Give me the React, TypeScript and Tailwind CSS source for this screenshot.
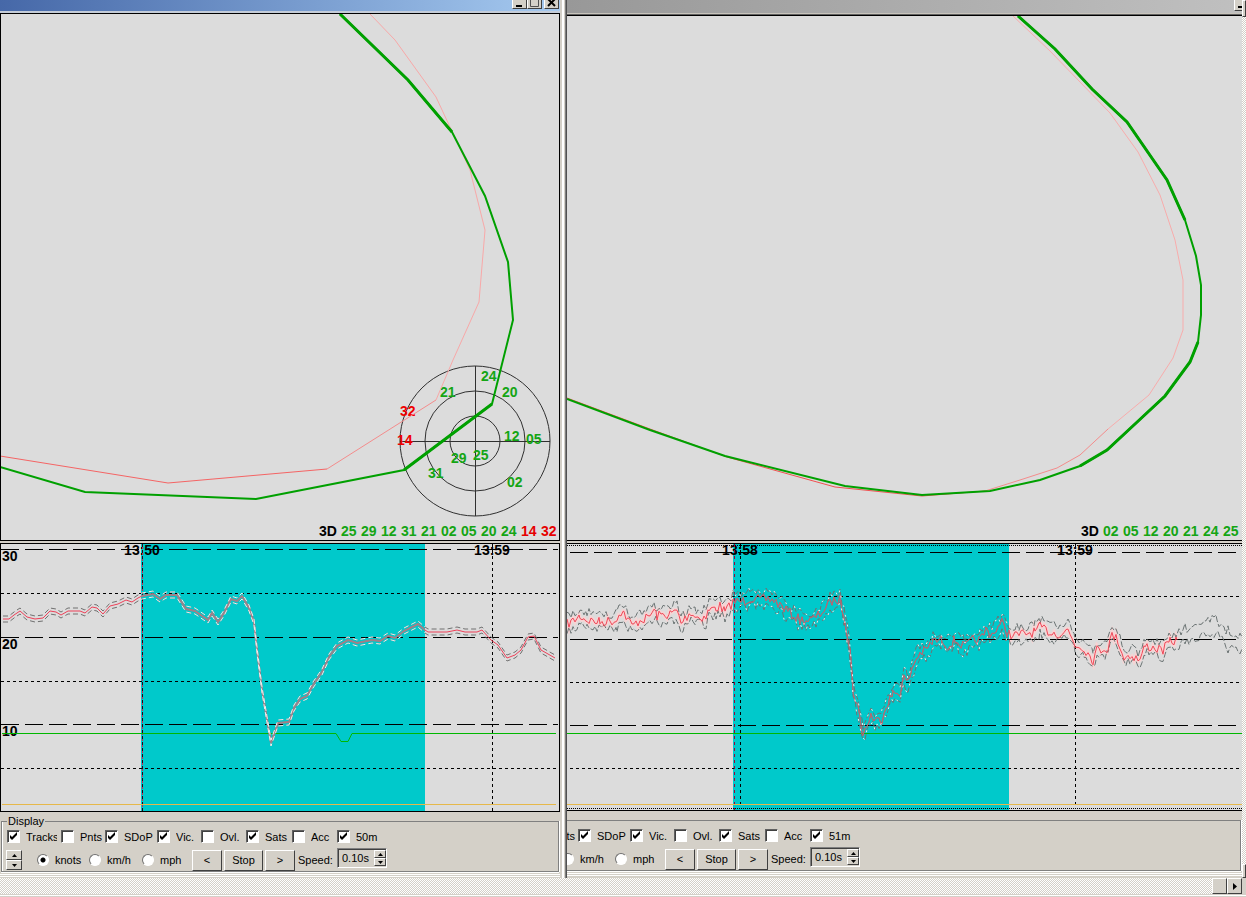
import { useState } from "react";

type Point = [number, number];

const toPoints = (points: Point[]) => points.map((p) => p.join(",")).join(" ");

const shift = (points: Point[], dy: number): Point[] =>
  points.map(([x, y]) => [x, y + dy]);

// fills in a sample every 2px with a bit of repeatable receiver noise
const addNoise = (points: Point[], amount: number, seed: number) => {
  const out: Point[] = [];
  let state = seed;
  for (let i = 0; i < points.length - 1; i++) {
    const [x1, y1] = points[i];
    const [x2, y2] = points[i + 1];
    for (let x = x1; x < x2; x += 2) {
      state = (state * 16807) % 2147483647;
      const noise = (state / 2147483647 - 0.5) * 2 * amount;
      const y = y1 + ((y2 - y1) * (x - x1)) / (x2 - x1) + noise;
      out.push([x, Math.round(y * 10) / 10]);
    }
  }
  out.push(points[points.length - 1]);
  return out;
};

const leftSpeed: Point[] = [
  [3, 619], [9, 619], [14, 615], [20, 611], [27, 617], [35, 619], [43, 618], [50, 611], [56, 612],
  [61, 615], [68, 611], [80, 611], [85, 613], [92, 607], [97, 608], [103, 614], [110, 606],
  [118, 604], [126, 600], [132, 602], [138, 598], [142, 596], [153, 594], [160, 599], [166, 595],
  [177, 595], [186, 609], [195, 611], [208, 620], [212, 613], [218, 622], [224, 613], [231, 599],
  [237, 601], [242, 596], [249, 608], [254, 622], [257, 650], [262, 690], [271, 743], [278, 723],
  [289, 722], [294, 708], [300, 699], [307, 696], [313, 685], [322, 672], [329, 657], [337, 646],
  [348, 640], [357, 643], [372, 640], [380, 641], [388, 636], [395, 638], [404, 631], [418, 624],
  [425, 630], [428, 632], [447, 632], [457, 630], [465, 632], [477, 632], [482, 630], [491, 640],
  [498, 645], [507, 658], [515, 655], [521, 650], [528, 637], [534, 636], [541, 650], [555, 658],
];

const rightSpeed: Point[] = [
  [567, 624], [573, 621], [580, 616], [587, 620], [600, 622], [610, 621], [617, 620], [619, 611],
  [624, 613], [632, 626], [640, 620], [648, 618], [654, 610], [657, 616], [670, 614], [677, 611],
  [681, 623], [691, 612], [696, 617], [706, 617], [709, 610], [716, 608], [720, 606], [725, 612],
  [733, 602], [745, 601], [750, 598], [760, 600], [772, 599], [780, 605], [790, 613], [800, 620],
  [812, 620], [820, 614], [832, 601], [840, 600], [845, 618], [850, 650], [853, 690], [858, 708],
  [863, 735], [867, 725], [871, 715], [875, 721], [882, 719], [886, 705], [893, 694], [900, 692],
  [904, 678], [908, 683], [912, 668], [918, 655], [926, 650], [933, 641], [942, 640], [948, 646],
  [955, 640], [965, 647], [973, 640], [980, 640], [986, 630], [992, 634], [1002, 623], [1007, 632],
  [1013, 636], [1022, 634], [1035, 632], [1040, 627], [1050, 632], [1060, 634], [1068, 630],
  [1075, 645], [1084, 648], [1093, 660], [1097, 650], [1108, 648], [1112, 635], [1118, 640],
  [1124, 658], [1130, 655], [1140, 660], [1145, 646], [1155, 648], [1163, 650], [1170, 642],
  [1177, 640],
];

const rightUpper: Point[] = [
  ...shift(rightSpeed, -7),
  [1185, 628], [1200, 625], [1208, 620], [1217, 619], [1224, 629], [1242, 637],
];
const rightLower: Point[] = [
  ...shift(rightSpeed, 7),
  [1185, 641], [1200, 638], [1212, 635], [1220, 637], [1226, 648], [1242, 649],
];

const leftTrack: Point[] = [
  [0, 467], [85, 492], [256, 499], [404, 470], [492, 404], [513, 320], [508, 262], [485, 196],
  [452, 132], [408, 80], [340, 14],
];
const rightTrack: Point[] = [
  [567, 399], [650, 430], [725, 456], [845, 486], [922, 495], [990, 491], [1040, 480], [1080, 466],
  [1107, 450], [1135, 424], [1165, 396], [1190, 362], [1198, 342], [1201, 315], [1201, 285],
  [1196, 256], [1185, 220], [1167, 180], [1127, 122], [1092, 89], [1055, 49], [1018, 16],
];

const satellites = [
  { id: "24", x: 481, y: 381 },
  { id: "20", x: 502, y: 397 },
  { id: "21", x: 440, y: 397 },
  { id: "32", x: 400, y: 416, lost: true },
  { id: "14", x: 397, y: 445, lost: true },
  { id: "12", x: 504, y: 441 },
  { id: "05", x: 526, y: 444 },
  { id: "29", x: 451, y: 463 },
  { id: "25", x: 473, y: 460 },
  { id: "31", x: 428, y: 478 },
  { id: "02", x: 507, y: 487 },
];

const raised =
  "bg-[#d4d0c8] border border-t-white border-l-white border-r-[#404040] border-b-[#404040]";
const sunken =
  "border border-t-[#808080] border-l-[#808080] border-r-white border-b-white";
const dither =
  "bg-[#ebe8e3] bg-[repeating-conic-gradient(#d4d0c8_0_25%,#ffffff_0_50%)] bg-[length:2px_2px]";

const SatList = ({ used, lost = [] }: { used: string[]; lost?: string[] }) => (
  <div className="absolute right-[3px] bottom-[2px] flex gap-1 text-[14px] leading-4 font-bold text-[#14a514]">
    <span className="w-[18px] text-black">3D</span>
    {used.map((id) => (
      <span key={id} className="w-4">
        {id}
      </span>
    ))}
    {lost.map((id) => (
      <span key={id} className="w-4 text-[#e60000]">
        {id}
      </span>
    ))}
  </div>
);

const SkyPlot = () => (
  <g>
    <g fill="none" stroke="#303030" strokeWidth="1">
      <circle cx="475" cy="441" r="25" />
      <circle cx="475" cy="441" r="50" />
      <circle cx="475" cy="441" r="75" />
      <path d="M400 441.5H550M475.5 366V516" />
    </g>
    {satellites.map((sat) => (
      <text
        key={sat.id}
        x={sat.x}
        y={sat.y}
        className="text-[14px] font-bold"
        fill={sat.lost ? "#f00000" : "#14a514"}
      >
        {sat.id}
      </text>
    ))}
  </g>
);

type GridProps = { x1: number; x2: number; major: number[]; minor: number[] };

const GridLines = ({ x1, x2, major, minor }: GridProps) => (
  <g stroke="#000" shapeRendering="crispEdges">
    {major.map((y) => (
      <line key={y} x1={x1} x2={x2} y1={y + 0.5} y2={y + 0.5} strokeDasharray="18 6" />
    ))}
    {minor.map((y) => (
      <line key={y} x1={x1} x2={x2} y1={y + 0.5} y2={y + 0.5} strokeDasharray="3 3" />
    ))}
  </g>
);

const LeftChart = () => (
  <svg viewBox="0 543 560 269" className="block h-auto w-full bg-[#dcdcdc]">
    <clipPath id="left-selection">
      <rect x="141" y="544" width="284" height="267" />
    </clipPath>
    <rect x="141" y="544" width="284" height="267" fill="#00c9cb" />
    <GridLines x1={1} x2={558} major={[549, 637, 724]} minor={[593, 681, 768]} />
    <g className="text-[14px] font-bold">
      <text x="2" y="561">30</text>
      <text x="2" y="649">20</text>
      <text x="2" y="736">10</text>
      <text x="142" y="555" textAnchor="middle">13:50</text>
      <text x="492" y="555" textAnchor="middle">13:59</text>
    </g>
    <g shapeRendering="crispEdges">
      <path d="M142.5 544V811" stroke="#300010" strokeDasharray="3 3" />
      <path d="M142.5 547V811" stroke="#d02050" strokeDasharray="2 4" />
      <path d="M492.5 544V811" stroke="#000" strokeDasharray="3 3" />
      <path d="M2 804.5H556" stroke="#e6b84a" />
    </g>
    <path d="M2 733.5H336L341 741.5H348L352 733.5H556" fill="none" stroke="#00b800" />
    <g fill="none" stroke="#707070" strokeDasharray="5 3">
      <polyline points={toPoints(shift(leftSpeed, -3))} />
      <polyline points={toPoints(shift(leftSpeed, 3))} />
    </g>
    <polyline points={toPoints(leftSpeed)} fill="none" stroke="#ee4058" />
    <g fill="none" clipPath="url(#left-selection)">
      <polyline points={toPoints(leftSpeed)} stroke="#a08088" strokeWidth="2" />
      <polyline points={toPoints(shift(leftSpeed, -3))} stroke="#e8f4f4" strokeDasharray="5 3" />
      <polyline points={toPoints(shift(leftSpeed, 3))} stroke="#e8f4f4" strokeDasharray="5 3" />
    </g>
    <rect x="0.5" y="543.5" width="559" height="268" fill="none" stroke="#000" />
  </svg>
);

const RightChart = () => {
  const speed = toPoints(addNoise(rightSpeed, 5, 7));
  const upper = toPoints(addNoise(rightUpper, 5, 2100));
  const lower = toPoints(addNoise(rightLower, 5, 99000));
  return (
    <svg viewBox="567 543 675 268" className="block h-auto w-full bg-[#dcdcdc]">
      <clipPath id="right-selection">
        <rect x="733" y="544" width="276" height="266" />
      </clipPath>
      <polyline points={speed} fill="none" stroke="#f6d4d4" strokeWidth="4" />
      <rect x="733" y="544" width="276" height="266" fill="#00c9cb" />
      <GridLines x1={570} x2={1240} major={[552, 639, 725]} minor={[596, 682, 768]} />
      <g className="text-[14px] font-bold">
        <text x="740" y="555" textAnchor="middle">13:58</text>
        <text x="1075" y="555" textAnchor="middle">13:59</text>
      </g>
      <g shapeRendering="crispEdges">
        <path d="M567 545.5H1242M567 808.5H1242" stroke="#000" strokeDasharray="1 1" />
        <path d="M734.5 544V810" stroke="#a00038" strokeDasharray="3 3" />
        <path d="M740.5 544V808M1075.5 544V808" stroke="#000" strokeDasharray="3 3" />
        <path d="M567 733.5H1242" stroke="#00b800" />
        <path d="M567 804.5H1242" stroke="#e6b84a" />
      </g>
      <g fill="none" stroke="#6c7474" strokeDasharray="6 2">
        <polyline points={upper} />
        <polyline points={lower} />
      </g>
      <polyline points={speed} fill="none" stroke="#f04858" />
      <g fill="none" clipPath="url(#right-selection)">
        <polyline points={speed} stroke="#a87078" />
        <polyline points={upper} stroke="#e8f4f4" strokeDasharray="2 8" />
        <polyline points={lower} stroke="#e8f4f4" strokeDasharray="2 8" />
      </g>
      <path d="M567 543.5H1242M567 810.5H1242" stroke="#000" />
    </svg>
  );
};

const Spinner = ({ small = false }: { small?: boolean }) => {
  const size = small ? "w-[12px] h-[8px]" : "w-[16px] h-[10px]";
  return (
    <div className="flex shrink-0 flex-col">
      <button aria-label="Up" className={`flex items-center justify-center ${size} ${raised}`}>
        <svg viewBox="0 0 5 3" className="h-[3px] w-[5px]">
          <path d="M0 3L2.5 0L5 3Z" />
        </svg>
      </button>
      <button aria-label="Down" className={`flex items-center justify-center ${size} ${raised}`}>
        <svg viewBox="0 0 5 3" className="h-[3px] w-[5px]">
          <path d="M0 0L2.5 3L5 0Z" />
        </svg>
      </button>
    </div>
  );
};

type CheckProps = { label: string; width: string; on?: boolean };

const Check = ({ label, width, on = false }: CheckProps) => {
  const [checked, setChecked] = useState(on);
  return (
    <label className={`flex shrink-0 items-center overflow-hidden ${width}`}>
      <span className="mb-px grid shrink-0">
        <input
          type="checkbox"
          checked={checked}
          onChange={() => setChecked(!checked)}
          className="col-start-1 row-start-1 h-[13px] w-[13px] appearance-none border border-t-[#606060] border-r-white border-b-white border-l-[#606060] bg-white shadow-[inset_1px_1px_0_#404040]"
        />
        {checked && (
          <svg viewBox="0 0 13 13" className="pointer-events-none col-start-1 row-start-1 h-[13px] w-[13px]">
            <path d="M3 5V8L5 10L10 5V2L5 7Z" />
          </svg>
        )}
      </span>
      <span className="ml-[6px] w-[31px] overflow-hidden whitespace-nowrap">{label}</span>
    </label>
  );
};

type RadioProps = { label: string; group: string; width: string; on?: boolean };

const Radio = ({ label, group, width, on }: RadioProps) => (
  <label className={`flex shrink-0 items-center ${width}`}>
    <input
      type="radio"
      name={group}
      defaultChecked={on}
      className="h-[12px] w-[12px] shrink-0 appearance-none rounded-full border border-t-[#707070] border-r-white border-b-white border-l-[#707070] bg-white checked:bg-[radial-gradient(circle,#000_2px,#fff_3px)]"
    />
    <span className="ml-[6px]">{label}</span>
  </label>
);

const DisplayPanel = ({ name, distance }: { name: string; distance: string }) => (
  <fieldset className="mr-px ml-px h-[58px] border border-[#808080] shadow-[inset_1px_0_0_#fff,0_1px_0_#fff,1px_0_0_#fff]">
    <legend className="ml-[5px] h-[14px] px-px leading-[14px]">Display</legend>
    <div className="flex h-[18px] items-center pl-[5px]">
      <Check label="Tracks" width="w-[54px]" on />
      <Check label="Pnts" width="w-[44px]" />
      <Check label="SDoP" width="w-[52px]" on />
      <Check label="Vic." width="w-[44px]" on />
      <Check label="Ovl." width="w-[45px]" />
      <Check label="Sats" width="w-[46px]" on />
      <Check label="Acc" width="w-[45px]" />
      <Check label={distance} width="w-[54px]" on />
    </div>
    <div className="mt-[2px] flex items-center pl-[4px]">
      <Spinner />
      <div className="ml-[15px] flex">
        <Radio label="knots" group={name} width="w-[52px]" on />
        <Radio label="km/h" group={name} width="w-[53px]" />
        <Radio label="mph" group={name} width="w-[50px]" />
      </div>
      <div className="flex shrink-0 gap-[2px]">
        <button className={`h-[21px] w-[30px] ${raised}`}>&lt;</button>
        <button className={`h-[21px] w-[39px] ${raised}`}>Stop</button>
        <button className={`h-[21px] w-[30px] ${raised}`}>&gt;</button>
      </div>
      <label className="ml-[3px] flex shrink-0 items-center">
        <span className="w-[39px]">Speed:</span>
        <span className={`mb-1 flex h-[20px] w-[50px] items-center bg-[#d4d0c8] ${sunken} shadow-[inset_1px_1px_0_#404040]`}>
          <input defaultValue="0.10s" className="w-[36px] bg-transparent pl-1 outline-none" />
          <Spinner small />
        </span>
      </label>
    </div>
  </fieldset>
);

const PanelEdge = () => (
  <div className="mt-[2px] flex flex-col gap-px pb-px">
    <div className="h-px bg-white" />
    <div className="h-px bg-white" />
  </div>
);

const CaptionButton = ({ label, children }: { label: string; children: React.ReactNode }) => (
  <button aria-label={label} className={`flex h-[9px] w-[15px] items-end justify-center border-t-0 ${raised}`}>
    {children}
  </button>
);

const LeftWindow = () => (
  <section className="flex">
    <div className="flex min-w-0 flex-1 flex-col">
      <div className="flex h-[11px] items-start justify-end bg-linear-to-r from-[#4668a8] to-[#a6caf0]">
        <CaptionButton label="Minimize">
          <svg viewBox="0 0 9 8" className="h-[8px] w-[9px]">
            <path d="M1 5H7V7H1Z" />
          </svg>
        </CaptionButton>
        <CaptionButton label="Maximize">
          <svg viewBox="0 0 9 8" className="h-[8px] w-[9px]">
            <path d="M0.5 0V6.5H8.5V0" fill="none" stroke="#505050" />
          </svg>
        </CaptionButton>
        <span className="mr-px ml-[2px] flex">
          <CaptionButton label="Close">
            <svg viewBox="0 0 9 8" className="h-[8px] w-[9px]">
              <path d="M1 -1L8 6M8 -1L1 6" stroke="#000" strokeWidth="2" />
            </svg>
          </CaptionButton>
        </span>
      </div>
      <div className="h-[2px] bg-[#c4ccd8]" />
      <div className="relative">
        <svg viewBox="0 13 560 528" className="block h-auto w-full bg-[#dcdcdc]">
          <SkyPlot />
          <g fill="none">
            <polyline points="0,456 168,483 327,469" stroke="#f46464" />
            <polyline points="327,469 436,400" stroke="#f48c8c" />
            <polyline points="436,400 453,360 479,302 485,230 470,170 436,97 395,40 370,14" stroke="#f8a8a8" />
            <polyline points={toPoints(leftTrack)} stroke="#00a000" strokeWidth="2" />
            <path d="M404 470L492 404M452 132L408 80L340 14" stroke="#00a000" strokeWidth="3" />
          </g>
          <rect x="0.5" y="13.5" width="559" height="527" fill="none" stroke="#000" />
        </svg>
        <SatList used={["25", "29", "12", "31", "21", "02", "05", "20", "24"]} lost={["14", "32"]} />
      </div>
      <div className="h-[2px] bg-[#d4d0c8]" />
      <LeftChart />
      <div className="pt-[2px]">
        <DisplayPanel name="left-units" distance="50m" />
      </div>
      <PanelEdge />
    </div>
    <div className="flex w-[7px]">
      <div className="w-[2px] bg-[#d4d0c8]" />
      <div className="w-[2px] bg-white" />
      <div className="w-[1px] bg-[#d4d0c8]" />
      <div className="w-[1px] bg-[#808080]" />
      <div className="w-[1px] bg-[#505050]" />
    </div>
  </section>
);

const RightWindow = () => (
  <section className="flex min-w-0 flex-col overflow-hidden">
    <div className="flex h-[13px] items-start justify-end bg-linear-to-r from-[#989898] to-[#c0c0c0]">
      <span className="flex h-[11px] w-[8px] items-end justify-end border-b border-l border-b-[#404040] border-l-white bg-[#d4d0c8] pb-[2px]">
        <span className="h-[2px] w-[4px] bg-black" />
      </span>
    </div>
    <div className="h-[2px] border-b border-[#606060] bg-[#c8c4bc]" />
    <div className="relative">
      <svg viewBox="567 15 675 526" className="block h-auto w-full bg-[#dcdcdc]">
        <g fill="none">
          <polyline
            points="1013,16 1050,51 1080,82 1110,113 1138,152 1160,195 1175,240 1183,280 1183,330 1173,358 1149,395 1108,429"
            stroke="#f8acac"
          />
          <polyline points="1108,429 1080,455 1057,468 1020,480 985,491" stroke="#f48c8c" />
          <polyline points="985,491 922,496 835,487 727,457 650,429 567,398" stroke="#f05050" />
          <polyline points={toPoints(rightTrack)} stroke="#00a000" strokeWidth="2" />
          <g stroke="#00a000" strokeWidth="3">
            <polyline points={toPoints(rightTrack.slice(7, 13))} />
            <polyline points={toPoints(rightTrack.slice(16))} />
          </g>
        </g>
        <path d="M567 15.5H1242M567 540.5H1242" stroke="#000" />
      </svg>
      <SatList used={["02", "05", "12", "20", "21", "24", "25"]} />
    </div>
    <div className="h-[2px] bg-[#d4d0c8]" />
    <RightChart />
    <div className="-ml-[94px] pt-[2px]">
      <DisplayPanel name="right-units" distance="51m" />
    </div>
    <PanelEdge />
  </section>
);

export default function App() {
  return (
    <main className="min-h-screen bg-[#d4d0c8] font-['Liberation_Sans',Arial,sans-serif] text-[11px] leading-[14px] text-black">
      <div className="grid grid-cols-[minmax(0,567fr)_minmax(0,675fr)_4px]">
        <LeftWindow />
        <RightWindow />
        <div className={`flex flex-col justify-between ${dither}`}>
          <div className={`h-[17px] ${raised}`} />
          <div className={`h-[14px] ${raised}`} />
        </div>
      </div>
      <div className="flex pr-[4px]">
        <div className={`h-[16px] flex-1 ${dither}`} />
        <button aria-label="Scroll thumb" className={`h-[16px] w-[15px] ${raised}`} />
        <button aria-label="Scroll right" className={`flex h-[16px] w-[15px] items-center justify-center ${raised}`}>
          <svg viewBox="0 0 4 7" className="h-[7px] w-[4px]">
            <path d="M0 0L4 3.5L0 7Z" />
          </svg>
        </button>
      </div>
      <div className="mt-px h-[3px] border-t border-white" />
    </main>
  );
}
